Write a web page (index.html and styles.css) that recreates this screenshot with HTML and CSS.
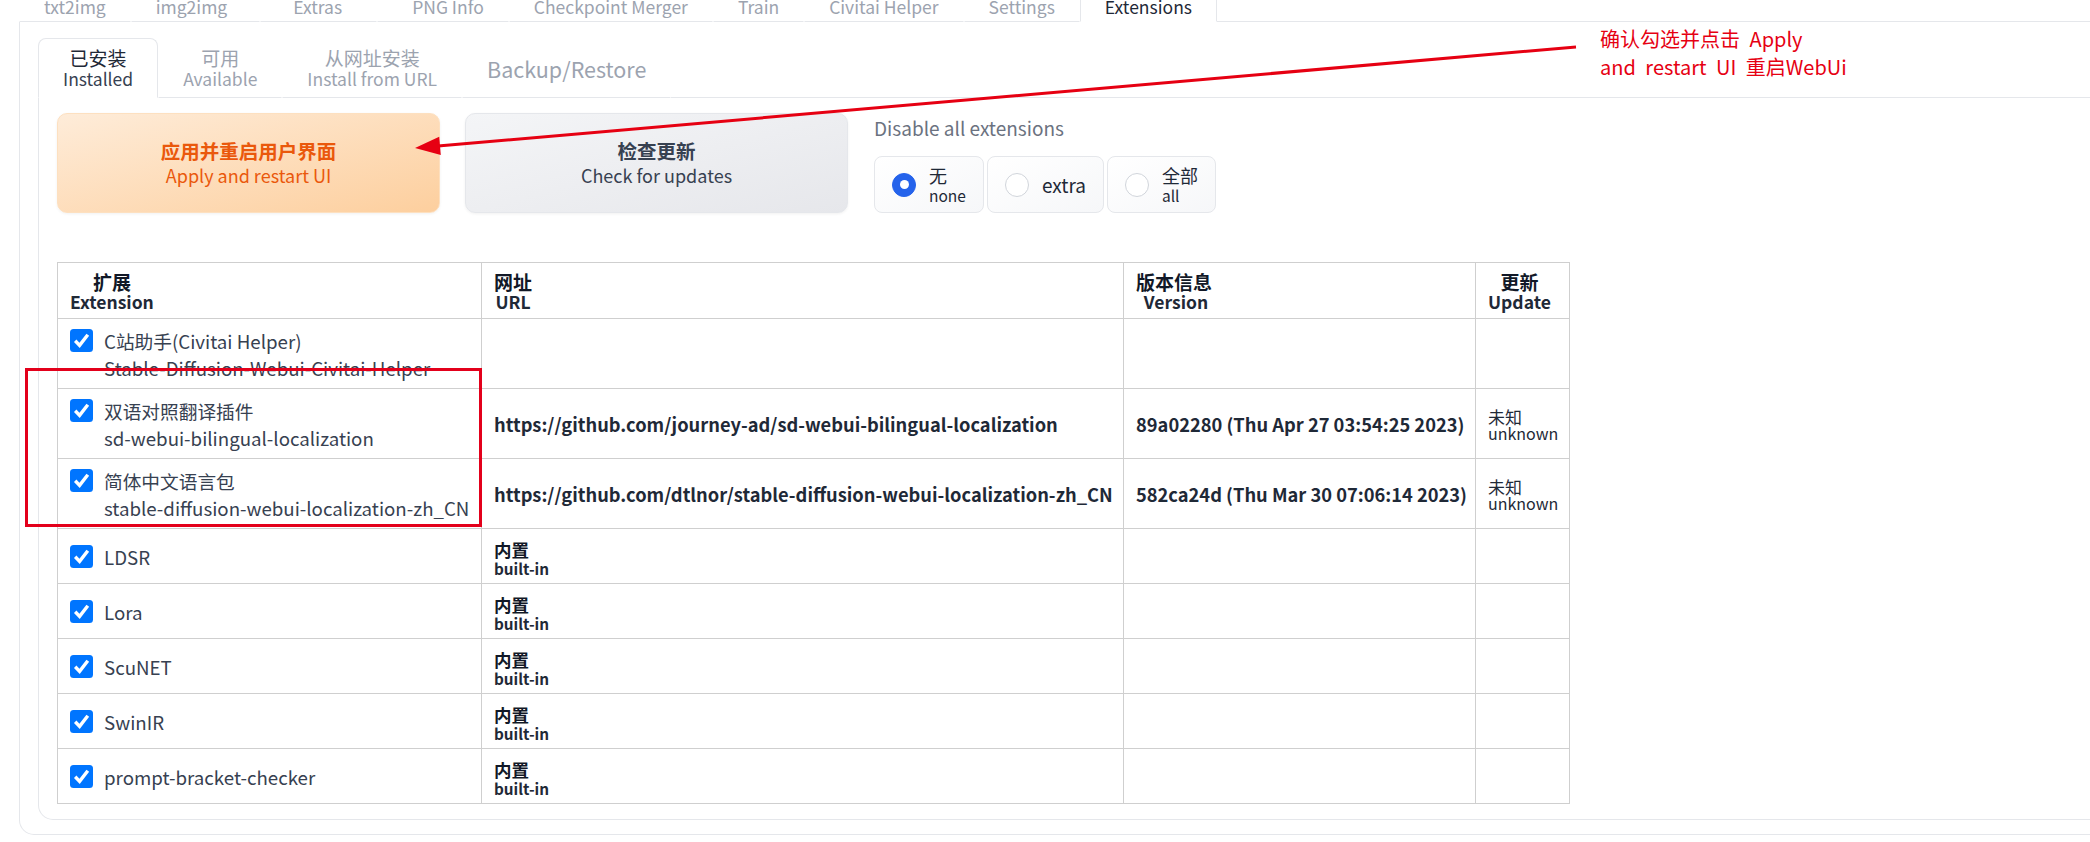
FILE: index.html
```html
<!DOCTYPE html>
<html lang="zh-CN">
<head>
<meta charset="utf-8">
<title>Extensions</title>
<link rel="stylesheet" href="styles.css">
</head>
<body>
<div class="page">
  <nav class="topnav">
    <span class="ttab">txt2img</span>
    <span class="ttab t-img2img">img2img</span>
    <span class="ttab t-extras">Extras</span>
    <span class="ttab t-png">PNG Info</span>
    <span class="ttab">Checkpoint Merger</span>
    <span class="ttab">Train</span>
    <span class="ttab">Civitai Helper</span>
    <span class="ttab">Settings</span>
    <span class="ttab active">Extensions</span>
    <span class="tfill"></span>
  </nav>

  <section class="outer">
    <nav class="subnav">
      <span class="stab active"><span class="bi"><span class="zh">已安装</span><span class="en">Installed</span></span></span>
      <span class="stab"><span class="bi"><span class="zh">可用</span><span class="en">Available</span></span></span>
      <span class="stab"><span class="bi"><span class="zh">从网址安装</span><span class="en">Install from URL</span></span></span>
      <span class="stab single">Backup/Restore</span>
      <span class="sfill"></span>
    </nav>

    <div class="inner">
      <div class="controls">
        <button class="btn primary"><span class="bi"><span class="zh">应用并重启用户界面</span><span class="en">Apply and restart UI</span></span></button>
        <button class="btn secondary"><span class="bi"><span class="zh">检查更新</span><span class="en">Check for updates</span></span></button>
        <div class="radio-block">
          <div class="rlabel">Disable all extensions</div>
          <div class="radios">
            <label class="ropt"><span class="rdot checked"></span><span class="bi left"><span class="zh">无</span><span class="en">none</span></span></label>
            <label class="ropt"><span class="rdot"></span><span class="rtext">extra</span></label>
            <label class="ropt"><span class="rdot"></span><span class="bi left"><span class="zh">全部</span><span class="en">all</span></span></label>
          </div>
        </div>
      </div>

      <table class="ext">
        <colgroup>
          <col class="c1"><col class="c2"><col class="c3"><col class="c4">
        </colgroup>
        <thead>
          <tr>
            <th><span class="hbi"><span class="zh">扩展</span><span class="en">Extension</span></span></th>
            <th><span class="hbi"><span class="zh">网址</span><span class="en">URL</span></span></th>
            <th><span class="hbi"><span class="zh">版本信息</span><span class="en">&nbsp;Version</span></span></th>
            <th><span class="hbi"><span class="zh">更新</span><span class="en">Update</span></span></th>
          </tr>
        </thead>
        <tbody>
          <tr class="tall">
            <td class="name"><div class="nm"><span class="cb"><svg viewBox="0 0 23 23"><rect width="23" height="23" rx="3.5" fill="#0075ff"/><path d="M5.2 11.8 L9.6 16.4 L17.8 5.8" fill="none" stroke="#fff" stroke-width="3.4"/></svg></span><span class="nlines"><span>C站助手(Civitai Helper)</span><span>Stable-Diffusion-Webui-Civitai-Helper</span></span></div></td>
            <td></td><td></td><td></td>
          </tr>
          <tr class="tall">
            <td class="name"><div class="nm"><span class="cb"><svg viewBox="0 0 23 23"><rect width="23" height="23" rx="3.5" fill="#0075ff"/><path d="M5.2 11.8 L9.6 16.4 L17.8 5.8" fill="none" stroke="#fff" stroke-width="3.4"/></svg></span><span class="nlines"><span>双语对照翻译插件</span><span>sd-webui-bilingual-localization</span></span></div></td>
            <td class="url">https://github.com/journey-ad/sd-webui-bilingual-localization</td>
            <td class="ver">89a02280 (Thu Apr 27 03:54:25 2023)</td>
            <td class="upd"><span class="ubi"><span class="zh">未知</span><span class="en">unknown</span></span></td>
          </tr>
          <tr class="tall">
            <td class="name"><div class="nm"><span class="cb"><svg viewBox="0 0 23 23"><rect width="23" height="23" rx="3.5" fill="#0075ff"/><path d="M5.2 11.8 L9.6 16.4 L17.8 5.8" fill="none" stroke="#fff" stroke-width="3.4"/></svg></span><span class="nlines"><span>简体中文语言包</span><span>stable-diffusion-webui-localization-zh_CN</span></span></div></td>
            <td class="url">https://github.com/dtlnor/stable-diffusion-webui-localization-zh_CN</td>
            <td class="ver">582ca24d (Thu Mar 30 07:06:14 2023)</td>
            <td class="upd"><span class="ubi"><span class="zh">未知</span><span class="en">unknown</span></span></td>
          </tr>
          <tr class="short">
            <td class="name"><div class="nm"><span class="cb"><svg viewBox="0 0 23 23"><rect width="23" height="23" rx="3.5" fill="#0075ff"/><path d="M5.2 11.8 L9.6 16.4 L17.8 5.8" fill="none" stroke="#fff" stroke-width="3.4"/></svg></span><span class="nlines"><span>LDSR</span></span></div></td>
            <td class="builtin"><span class="bbi"><span class="zh">内置</span><span class="en">built-in</span></span></td>
            <td></td><td></td>
          </tr>
          <tr class="short">
            <td class="name"><div class="nm"><span class="cb"><svg viewBox="0 0 23 23"><rect width="23" height="23" rx="3.5" fill="#0075ff"/><path d="M5.2 11.8 L9.6 16.4 L17.8 5.8" fill="none" stroke="#fff" stroke-width="3.4"/></svg></span><span class="nlines"><span>Lora</span></span></div></td>
            <td class="builtin"><span class="bbi"><span class="zh">内置</span><span class="en">built-in</span></span></td>
            <td></td><td></td>
          </tr>
          <tr class="short">
            <td class="name"><div class="nm"><span class="cb"><svg viewBox="0 0 23 23"><rect width="23" height="23" rx="3.5" fill="#0075ff"/><path d="M5.2 11.8 L9.6 16.4 L17.8 5.8" fill="none" stroke="#fff" stroke-width="3.4"/></svg></span><span class="nlines"><span>ScuNET</span></span></div></td>
            <td class="builtin"><span class="bbi"><span class="zh">内置</span><span class="en">built-in</span></span></td>
            <td></td><td></td>
          </tr>
          <tr class="short">
            <td class="name"><div class="nm"><span class="cb"><svg viewBox="0 0 23 23"><rect width="23" height="23" rx="3.5" fill="#0075ff"/><path d="M5.2 11.8 L9.6 16.4 L17.8 5.8" fill="none" stroke="#fff" stroke-width="3.4"/></svg></span><span class="nlines"><span>SwinIR</span></span></div></td>
            <td class="builtin"><span class="bbi"><span class="zh">内置</span><span class="en">built-in</span></span></td>
            <td></td><td></td>
          </tr>
          <tr class="short">
            <td class="name"><div class="nm"><span class="cb"><svg viewBox="0 0 23 23"><rect width="23" height="23" rx="3.5" fill="#0075ff"/><path d="M5.2 11.8 L9.6 16.4 L17.8 5.8" fill="none" stroke="#fff" stroke-width="3.4"/></svg></span><span class="nlines"><span>prompt-bracket-checker</span></span></div></td>
            <td class="builtin"><span class="bbi"><span class="zh">内置</span><span class="en">built-in</span></span></td>
            <td></td><td></td>
          </tr>
        </tbody>
      </table>
    </div>
  </section>

  <svg class="overlay" viewBox="0 0 2090 842" width="2090" height="842">
    <rect x="26.5" y="369.5" width="454" height="156" fill="none" stroke="#e3001b" stroke-width="3"/>
    <line x1="1576" y1="47" x2="438" y2="146" stroke="#e60012" stroke-width="3"/>
    <polygon points="415,148 440.8,155 439.2,136.8" fill="#e60012"/>
  </svg>
  <div class="note"><div>确认勾选并点击 Apply</div><div>and restart UI 重启WebUi</div></div>
</div>
</body>
</html>
```

FILE: styles.css
```css
* { box-sizing: border-box; }

body {
  margin: 0;
  overflow: hidden;
  background: #ffffff;
  font-family: "Noto Sans CJK SC", "Noto Sans", sans-serif;
  color: #374151;
}

.page {
  position: relative;
  width: 2090px;
  height: 842px;
  overflow: hidden;
}

/* top tabs */
.topnav {
  display: flex;
  margin-left: 19px;
  margin-top: -7px;
}
.ttab {
  padding: 0 24px;
  line-height: 28px;
  font-size: 17.5px;
  color: #9ca3af;
  white-space: nowrap;
  border: 1px solid transparent;
  border-top: none;
  border-bottom: 1px solid #e5e7eb;
}
.ttab.t-img2img { padding-right: 32px; }
.ttab.t-extras { padding-left: 32px; padding-right: 34px; }
.ttab.t-png { padding-left: 34px; }
.ttab.active {
  color: #1f2937;
  border-left-color: #e5e7eb;
  border-right-color: #e5e7eb;
  border-bottom-color: #ffffff;
}
.tfill {
  flex: 1;
  border-bottom: 1px solid #e5e7eb;
}

/* outer panel */
.outer {
  margin-left: 19px;
  width: 2140px;
  border: 1px solid #e5e7eb;
  border-top: none;
  border-radius: 0 0 15px 15px;
  padding: 16px 18px 14px;
}

.subnav {
  display: flex;
  align-items: stretch;
}
.stab {
  display: flex;
  align-items: center;
  padding: 8px 24px;
  border: 1px solid transparent;
  border-bottom: 1px solid #e5e7eb;
  border-radius: 8px 8px 0 0;
  color: #9ca3af;
  white-space: nowrap;
}
.stab.active {
  border-color: #e5e7eb;
  border-bottom-color: #ffffff;
  color: #1f2937;
}
.stab.single {
  font-size: 21.5px;
}
.sfill {
  flex: 1;
  border-bottom: 1px solid #e5e7eb;
}

.bi {
  display: inline-flex;
  flex-direction: column;
  align-items: center;
}
.bi.left { align-items: flex-start; }
.stab .zh { font-size: 19px; line-height: 22px; }
.stab .en { font-size: 17.5px; line-height: 20px; }
.stab.active .en { color: #374151; }

/* inner panel */
.inner {
  border: 1px solid #e5e7eb;
  border-top: none;
  border-radius: 0 0 15px 15px;
  padding: 15px 18px 15px;
}

.controls {
  display: flex;
  gap: 25px;
  height: 100px;
}
.btn {
  width: 383px;
  height: 100px;
  border-radius: 10px;
  font-family: inherit;
  display: flex;
  align-items: center;
  justify-content: center;
  padding: 0;
  box-shadow: 0 1px 3px rgba(0, 0, 0, 0.06);
}
.btn .zh { font-size: 19.5px; font-weight: 700; line-height: 24px; }
.btn .en { font-size: 18px; line-height: 24px; }
.btn.primary {
  background: linear-gradient(to bottom right, #feecd9, #fdcf9e);
  border: 1px solid #fde0c0;
  color: #ea580c;
}
.btn.secondary {
  background: linear-gradient(to bottom right, #f4f5f7, #e6e7eb);
  border: 1px solid #e5e7eb;
  color: #374151;
}

.radio-block {
  display: flex;
  flex-direction: column;
  margin-left: 1px;
}
.rlabel {
  font-size: 19px;
  line-height: 30px;
  color: #6b7280;
  margin-bottom: 13px;
}
.radios {
  display: flex;
  gap: 3px;
}
.ropt {
  display: flex;
  align-items: center;
  gap: 13px;
  height: 57px;
  padding: 0 17px;
  border: 1px solid #e5e7eb;
  border-radius: 8px;
  background: linear-gradient(to bottom right, #ffffff, #f6f7f9);
  color: #1f2937;
}
.rdot {
  width: 24px;
  height: 24px;
  border-radius: 50%;
  border: 1px solid #d1d5db;
  background: #ffffff;
  display: flex;
  align-items: center;
  justify-content: center;
}
.rdot.checked {
  border-color: #2563eb;
  background: #2563eb;
}
.rdot.checked::after {
  content: "";
  width: 9px;
  height: 9px;
  border-radius: 50%;
  background: #ffffff;
}
.ropt .zh { font-size: 18px; line-height: 21px; }
.ropt .en { font-size: 15.5px; line-height: 18px; }
.rtext { font-size: 19px; }

/* table */
.ext {
  margin-top: 49px;
  border-collapse: collapse;
  table-layout: fixed;
  width: 1512px;
  color: #1f2937;
}
.c1 { width: 424px; }
.c2 { width: 642px; }
.c3 { width: 352px; }
.c4 { width: 94px; }

.ext th, .ext td {
  border: 1px solid #cfcfcf;
  padding: 7px 12px;
  text-align: left;
  vertical-align: middle;
}
.ext thead th { padding: 8px 12px; }
.ext thead tr { height: 55px; }
.ext tr.tall { height: 70px; }
.ext tr.short { height: 54px; }

.hbi {
  display: inline-flex;
  flex-direction: column;
  align-items: center;
}
.hbi .zh { font-size: 19px; font-weight: 700; line-height: 22px; color: #111827; }
.hbi .en { font-size: 17.5px; font-weight: 600; line-height: 17px; color: #1f2937; }

.nm {
  display: flex;
  gap: 11px;
  align-items: flex-start;
}
.cb {
  flex: none;
  width: 23px;
  height: 23px;
  margin-top: 2px;
}
.cb svg { display: block; width: 23px; height: 23px; }
.nlines {
  display: flex;
  flex-direction: column;
  font-size: 18.7px;
  line-height: 27px;
  color: #374151;
  white-space: nowrap;
}

.url, .ver {
  font-size: 18.3px;
  font-weight: 600;
  color: #1f2937;
  white-space: nowrap;
}

.ubi, .bbi {
  display: flex;
  flex-direction: column;
  align-items: flex-start;
}
.ubi .zh { font-size: 17px; line-height: 19px; }
.ubi .en { font-size: 16px; line-height: 15px; }
.ext td.builtin { padding: 11px 12px 7px; vertical-align: top; }
.bbi .zh { font-size: 17.5px; font-weight: 700; line-height: 20px; color: #111827; }
.bbi .en { font-size: 15.3px; font-weight: 600; line-height: 16px; color: #1f2937; }

/* annotation overlay */
.overlay {
  position: absolute;
  left: 0;
  top: 0;
  pointer-events: none;
}
.note {
  position: absolute;
  left: 1600px;
  top: 25px;
  font-size: 20px;
  line-height: 28px;
  color: #e60012;
  word-spacing: 5px;
}
```
